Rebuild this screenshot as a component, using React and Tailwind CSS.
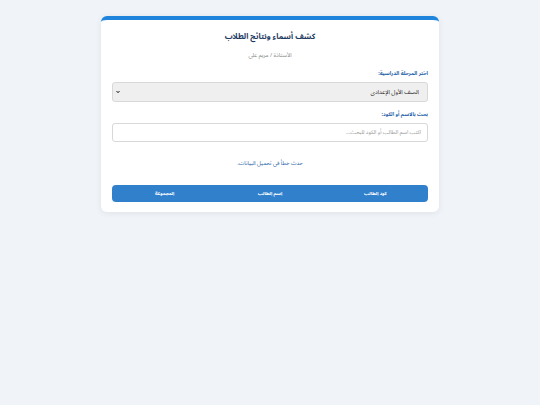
import React, { useState } from 'react';

const columns = ['كود الطالب', 'اسم الطالب', 'المجموعة'];

const App = () => {
  const [grade, setGrade] = useState('1');
  const [query, setQuery] = useState('');

  return (
    <div dir="rtl" className="min-h-screen bg-[#f0f4f8] pt-4 font-['Noto_Sans_Arabic','DejaVu_Sans',sans-serif]">
      <div className="mx-auto w-[338px] rounded-md border-t-4 border-[#1f84dc] bg-white px-[11px] pt-[10px] pb-[10px] shadow-[0_1px_6px_rgba(0,0,0,0.08)]">
        {/* Header */}
        <h1 className="text-center text-[7.8px] leading-[14px] font-bold text-[#1e3a5f]">
          كشف أسماء ونتائج الطلاب
        </h1>
        <p className="mt-[6px] text-center text-[5.7px] leading-[10px] text-[#8a8a8a]">
          الأستاذة / مريم علي
        </p>

        {/* Grade select */}
        <label className="mt-[9px] block text-[5.3px] leading-[10px] font-bold text-[#1f5fa8]">
          اختر المرحلة الدراسية:
        </label>
        <div className="relative mt-[3px]">
          <select
            value={grade}
            onChange={(e) => setGrade(e.target.value)}
            className="block h-[20px] w-full appearance-none rounded-[3px] border border-[#d8d8d8] bg-[#efefef] pr-[8px] pl-[14px] text-[5.8px] text-[#222]"
          >
            <option value="1">الصف الأول الإعدادي</option>
            <option value="2">الصف الثاني الإعدادي</option>
            <option value="3">الصف الثالث الإعدادي</option>
          </select>
          <svg
            className="pointer-events-none absolute top-1/2 left-[4px] -translate-y-1/2"
            width="4"
            height="3"
            viewBox="0 0 8 6"
          >
            <path d="M1 1l3 3.5L7 1" fill="none" stroke="#222" strokeWidth="2" />
          </svg>
        </div>

        {/* Search */}
        <label className="mt-[8px] block text-[5.2px] leading-[10px] font-bold text-[#1f5fa8]">
          بحث بالاسم أو الكود:
        </label>
        <input
          value={query}
          onChange={(e) => setQuery(e.target.value)}
          placeholder="اكتب اسم الطالب أو الكود للبحث..."
          className="mt-[3px] block h-[19px] w-full rounded-[3px] border border-[#d8d8d8] bg-white px-[6px] text-[5.4px] outline-none placeholder:text-[#9a9a9a]"
        />

        {/* Status */}
        <p className="mt-[16px] text-center text-[5.5px] leading-[10px] text-[#1f5fa8]">
          حدث خطأ في تحميل البيانات.
        </p>

        {/* Table */}
        <table className="mt-[17px] w-full table-fixed border-separate border-spacing-0">
          <thead>
            <tr>
              {columns.map((col, i) => (
                <th
                  key={col}
                  className={`h-[17px] bg-[#3180cc] text-center text-[4.7px] font-bold text-white ${
                    i === 0 ? 'rounded-r-[4px]' : ''
                  } ${i === columns.length - 1 ? 'rounded-l-[4px]' : ''}`}
                >
                  {col}
                </th>
              ))}
            </tr>
          </thead>
        </table>
      </div>
    </div>
  );
};

export default App;
